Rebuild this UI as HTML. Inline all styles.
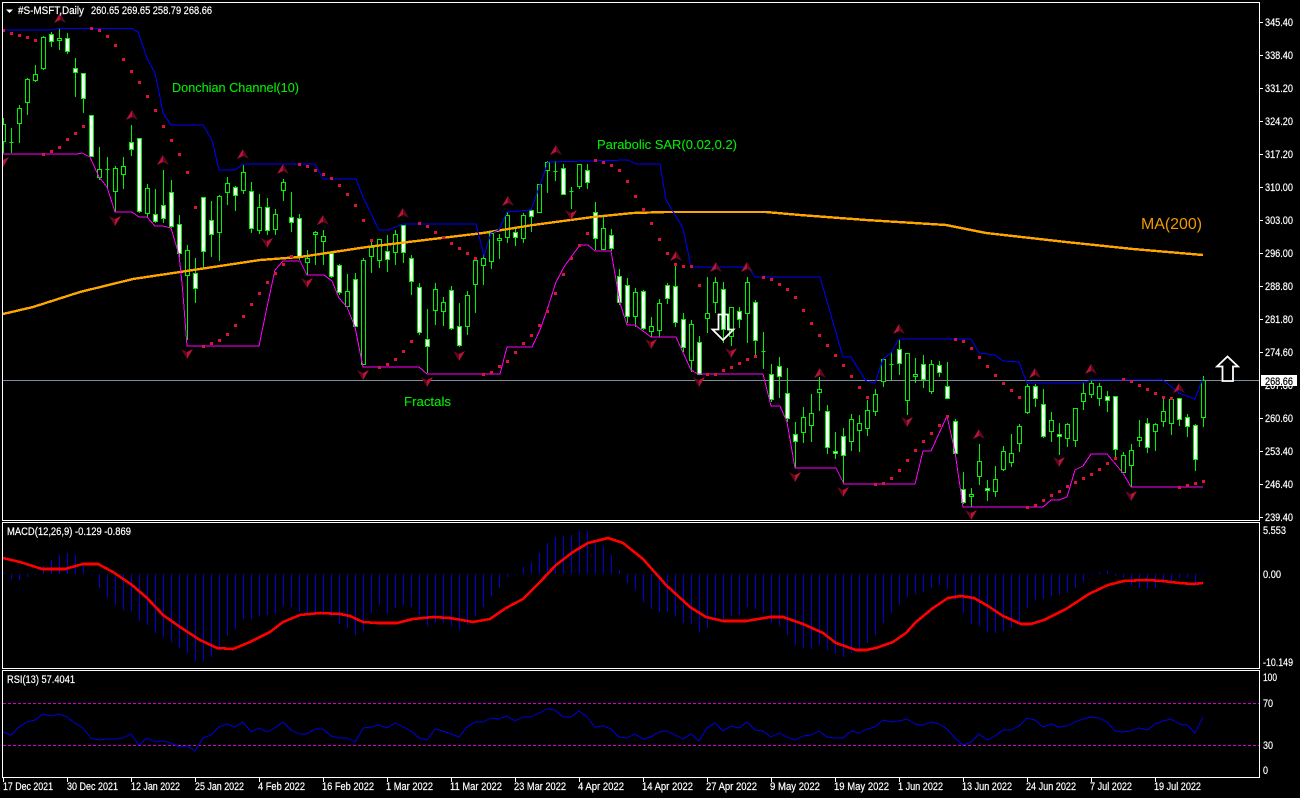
<!DOCTYPE html>
<html><head><meta charset="utf-8"><title>#S-MSFT,Daily</title>
<style>
html,body{margin:0;padding:0;background:#000;width:1300px;height:798px;overflow:hidden}
svg{display:block}
text{font-family:"Liberation Sans",sans-serif;fill:#fff;font-size:11px;stroke:#fff;stroke-width:.2}
.g{fill:#00f000;stroke:#00f000;stroke-width:.1;font-size:13px}
</style></head><body>
<svg width="1300" height="798" viewBox="0 0 1300 798" xmlns="http://www.w3.org/2000/svg">
<defs>
<clipPath id="c1"><rect x="3" y="3" width="1256" height="517"/></clipPath>
<g id="u"><path d="M0 -5L-6 5L0 2Z" fill="#b8123a"/><path d="M0 -5L6 5L0 2Z" fill="#5e0a1e"/></g>
<g id="d"><path d="M0 5L6 -5L0 -2Z" fill="#b8123a"/><path d="M0 5L-6 -5L0 -2Z" fill="#5e0a1e"/></g>
</defs>
<rect width="1300" height="798" fill="#000"/>
<g clip-path="url(#c1)">
<path d="M3 380.5H1259" stroke="#7f8c9a" stroke-width="1" shape-rendering="crispEdges"/>
<path shape-rendering="crispEdges" stroke="#00f400" stroke-width="1" fill="none" d="M3.5 118V153M11.5 128V153M19.5 105V143M27.5 78V115M35.5 65V82M43.5 36V70M51.5 32V47M59.5 28V50M67.5 33V54M75.5 58V97M83.5 73V113M91.5 115V157M99.5 147V180M107.5 157V188M115.5 166V212M123.5 157V189M131.5 125V156M139.5 138V213M147.5 184V217M155.5 189V223M163.5 170V223M171.5 180V228M179.5 215V257M187.5 245V340M195.5 258V303M203.5 197V268M211.5 201V257M219.5 195V261M227.5 177V205M235.5 186V211M243.5 165V194M251.5 182V233M259.5 194V234M267.5 198V235M275.5 209V235M283.5 179V201M291.5 192V232M299.5 214V260M307.5 250V275M315.5 231V265M323.5 230V265M331.5 253V278M339.5 264V295M347.5 274V307M355.5 273V327M363.5 258V365M371.5 240V273M379.5 239V268M387.5 235V272M395.5 230V265M403.5 225V263M411.5 255V295M419.5 283V335M427.5 309V373M435.5 283V325M443.5 297V326M451.5 286V330M459.5 303V347M467.5 291V335M475.5 257V313M483.5 255V285M491.5 233V269M499.5 234V259M507.5 212V243M515.5 228V246M523.5 213V243M531.5 208V232M539.5 184V213M547.5 161V193M555.5 161V181M563.5 164V195M571.5 187V209M579.5 164V189M587.5 164V189M595.5 202V250M603.5 217V250M611.5 229V251M619.5 269V305M627.5 278V323M635.5 288V327M643.5 290V330M651.5 317V337M659.5 299V337M667.5 283V304M675.5 265V327M683.5 313V352M691.5 320V372M699.5 336V375M707.5 277V333M715.5 277V313M723.5 282V343M731.5 307V346M739.5 307V328M747.5 277V343M755.5 300V355M763.5 332V369M771.5 364V402M779.5 357V398M787.5 368V422M795.5 422V468M803.5 407V443M811.5 394V442M819.5 377V411M827.5 405V454M835.5 432V459M843.5 428V484M851.5 414V451M859.5 415V452M867.5 400V436M875.5 389V416M883.5 359V387M891.5 352V380M899.5 340V375M907.5 353V415M915.5 358V383M923.5 355V388M931.5 360V394M939.5 361V377M947.5 362V399M955.5 419V455M963.5 472V504M971.5 488V507M979.5 444V485M987.5 480V501M995.5 466V497M1003.5 446V471M1011.5 434V467M1019.5 424V452M1027.5 384V414M1035.5 384V407M1043.5 389V438M1051.5 412V442M1059.5 423V455M1067.5 423V447M1075.5 408V447M1083.5 383V410M1091.5 380V398M1099.5 383V406M1107.5 391V412M1115.5 396V457M1123.5 452V473M1131.5 444V487M1139.5 420V447M1147.5 418V453M1155.5 423V451M1163.5 398V427M1171.5 398V435M1179.5 398V426M1187.5 414V437M1195.5 424V471M1203.5 376V427"/>
<path shape-rendering="crispEdges" stroke="#00f400" stroke-width="1" fill="#000" d="M1.5 124.5h4V141.5h-4zM9.5 142.5h4zM17.5 108.5h4V123.5h-4zM25.5 79.5h4V102.5h-4zM33.5 74.5h4V80.5h-4zM41.5 37.5h4V68.5h-4zM57.5 38.5h4V40.5h-4zM97.5 169.5h4V177.5h-4zM105.5 169.5h4zM113.5 168.5h4V191.5h-4zM121.5 166.5h4V174.5h-4zM145.5 188.5h4V213.5h-4zM185.5 250.5h4V275.5h-4zM217.5 196.5h4V232.5h-4zM225.5 183.5h4V192.5h-4zM241.5 172.5h4V190.5h-4zM257.5 207.5h4V230.5h-4zM273.5 214.5h4V229.5h-4zM281.5 182.5h4V190.5h-4zM305.5 258.5h4V262.5h-4zM313.5 232.5h4V234.5h-4zM321.5 236.5h4V241.5h-4zM345.5 291.5h4V306.5h-4zM361.5 260.5h4V364.5h-4zM369.5 247.5h4V256.5h-4zM377.5 239.5h4V260.5h-4zM393.5 234.5h4V252.5h-4zM433.5 289.5h4V310.5h-4zM441.5 302.5h4V311.5h-4zM465.5 295.5h4V326.5h-4zM473.5 260.5h4V284.5h-4zM481.5 258.5h4V265.5h-4zM489.5 233.5h4V261.5h-4zM497.5 238.5h4V240.5h-4zM505.5 215.5h4V237.5h-4zM521.5 215.5h4V238.5h-4zM537.5 184.5h4V212.5h-4zM545.5 162.5h4V170.5h-4zM553.5 171.5h4zM569.5 191.5h4zM577.5 164.5h4V186.5h-4zM601.5 228.5h4V249.5h-4zM633.5 292.5h4V316.5h-4zM649.5 326.5h4V331.5h-4zM657.5 303.5h4V330.5h-4zM689.5 324.5h4V360.5h-4zM705.5 313.5h4V318.5h-4zM713.5 282.5h4V302.5h-4zM729.5 307.5h4V336.5h-4zM745.5 282.5h4V313.5h-4zM761.5 351.5h4zM801.5 417.5h4V432.5h-4zM809.5 413.5h4V425.5h-4zM817.5 389.5h4V392.5h-4zM849.5 419.5h4V441.5h-4zM857.5 423.5h4V430.5h-4zM865.5 410.5h4V428.5h-4zM873.5 394.5h4V411.5h-4zM881.5 359.5h4V381.5h-4zM889.5 364.5h4zM905.5 353.5h4V400.5h-4zM913.5 374.5h4V376.5h-4zM929.5 364.5h4V391.5h-4zM969.5 494.5h4V496.5h-4zM977.5 461.5h4V476.5h-4zM993.5 479.5h4V491.5h-4zM1001.5 451.5h4V469.5h-4zM1009.5 453.5h4V462.5h-4zM1017.5 426.5h4V443.5h-4zM1025.5 386.5h4V412.5h-4zM1049.5 420.5h4V431.5h-4zM1065.5 424.5h4V438.5h-4zM1073.5 408.5h4V440.5h-4zM1081.5 393.5h4V401.5h-4zM1089.5 383.5h4V394.5h-4zM1097.5 386.5h4V398.5h-4zM1121.5 455.5h4V472.5h-4zM1129.5 450.5h4V465.5h-4zM1137.5 437.5h4V440.5h-4zM1153.5 424.5h4V431.5h-4zM1161.5 411.5h4V421.5h-4zM1169.5 399.5h4V423.5h-4zM1201.5 380.5h4V417.5h-4z"/>
<path shape-rendering="crispEdges" stroke="#00f400" stroke-width="1" fill="#fff" d="M49.5 34.5h4V41.5h-4zM65.5 38.5h4V51.5h-4zM73.5 68.5h4V72.5h-4zM81.5 73.5h4V98.5h-4zM89.5 115.5h4V156.5h-4zM129.5 142.5h4V149.5h-4zM137.5 138.5h4V211.5h-4zM153.5 214.5h4V221.5h-4zM161.5 205.5h4V218.5h-4zM169.5 192.5h4V226.5h-4zM177.5 224.5h4V253.5h-4zM193.5 273.5h4V288.5h-4zM201.5 197.5h4V251.5h-4zM209.5 220.5h4V234.5h-4zM233.5 187.5h4V195.5h-4zM249.5 191.5h4V228.5h-4zM265.5 207.5h4V230.5h-4zM289.5 217.5h4V222.5h-4zM297.5 218.5h4V257.5h-4zM329.5 253.5h4V276.5h-4zM337.5 265.5h4V292.5h-4zM353.5 279.5h4V326.5h-4zM385.5 251.5h4V259.5h-4zM401.5 225.5h4V252.5h-4zM409.5 258.5h4V281.5h-4zM417.5 287.5h4V332.5h-4zM425.5 339.5h4V346.5h-4zM449.5 290.5h4V328.5h-4zM457.5 326.5h4V345.5h-4zM513.5 232.5h4V237.5h-4zM529.5 210.5h4V216.5h-4zM561.5 168.5h4V194.5h-4zM585.5 170.5h4V182.5h-4zM593.5 212.5h4V238.5h-4zM609.5 235.5h4V248.5h-4zM617.5 276.5h4V302.5h-4zM625.5 285.5h4V316.5h-4zM641.5 291.5h4V328.5h-4zM665.5 285.5h4V298.5h-4zM673.5 286.5h4V322.5h-4zM681.5 319.5h4V347.5h-4zM697.5 342.5h4V374.5h-4zM721.5 289.5h4V329.5h-4zM737.5 311.5h4V319.5h-4zM753.5 302.5h4V340.5h-4zM769.5 374.5h4V399.5h-4zM777.5 366.5h4V376.5h-4zM785.5 393.5h4V418.5h-4zM793.5 434.5h4V441.5h-4zM825.5 411.5h4V447.5h-4zM833.5 451.5h4V453.5h-4zM841.5 436.5h4V455.5h-4zM897.5 349.5h4V363.5h-4zM921.5 364.5h4V379.5h-4zM937.5 365.5h4V372.5h-4zM945.5 386.5h4V398.5h-4zM953.5 421.5h4V453.5h-4zM961.5 489.5h4V502.5h-4zM985.5 488.5h4V490.5h-4zM1033.5 386.5h4V398.5h-4zM1041.5 404.5h4V436.5h-4zM1057.5 434.5h4V436.5h-4zM1105.5 396.5h4V400.5h-4zM1113.5 396.5h4V449.5h-4zM1145.5 423.5h4V447.5h-4zM1177.5 398.5h4V419.5h-4zM1185.5 417.5h4V426.5h-4zM1193.5 425.5h4V459.5h-4z"/>
<polyline shape-rendering="crispEdges" fill="none" stroke="#ffa500" stroke-width="2.4" points="3,314 33,307 80,292 133,279 180,272 220,266 260,260 300,257 367,247 433,239 483,233 533,225 593,217 633,213 666,212 766,212 800,215 866,220 946,225 986,233 1066,242 1133,249 1203,255"/>
<polyline shape-rendering="crispEdges" fill="none" stroke="#0000ff" stroke-width="1" points="3,30 51,30 59,28.5 132,28.5 138,32 147,58 155,73 160,97 163,113 171,125 203,125 212,140 219,170 235,170 243,164 315,164 323,179 356,179 363,197 379,230 388,230 403,224 476,224 484,256 491,233 499,230 507,212 531,210 540,185 548,162 628,160 636,164 660,164 666,200 683,228 691,267 748,267 755,277 820,277 843,357 851,357 866,381 875,383 883,359 891,353 899,339 971,339 979,353 995,355 1003,361 1019,362 1027,383 1083,383 1091,380 1163,380 1179,393 1195,399 1203,378"/>
<polyline shape-rendering="crispEdges" fill="none" stroke="#ff00ff" stroke-width="1" points="3,154 77,154 82,153 90,157 99,177 107,187 115,212 132,212 139,217 147,217 155,226 163,226 171,228 179,255 182,283 184,307 187,346 259,346 267,307 275,270 283,261 300,261 307,275 324,275 332,281 339,298 347,307 355,327 363,367 419,367 427,374 500,374 507,347 532,347 540,330 548,307 556,282 564,267 571,257 580,245 588,245 595,251 611,251 620,303 627,325 635,325 651,337 676,337 691,370 698,374 763,374 771,406 780,406 787,422 795,468 836,468 844,484 915,484 923,451 931,451 947,416 955,452 963,507 1043,507 1051,500 1059,500 1067,497 1075,470 1083,466 1091,454 1107,454 1123,473 1131,487 1203,487"/>
<path shape-rendering="crispEdges" fill="#dc143c" d="M2 29h3v3h-3zM10 32h3v3h-3zM18 34h3v3h-3zM26 36h3v3h-3zM34 39h3v3h-3zM42 153h3v3h-3zM50 150h3v3h-3zM58 146h3v3h-3zM66 138h3v3h-3zM74 132h3v3h-3zM82 125h3v3h-3zM90 27h3v3h-3zM98 29h3v3h-3zM106 35h3v3h-3zM114 44h3v3h-3zM122 58h3v3h-3zM130 70h3v3h-3zM138 81h3v3h-3zM146 95h3v3h-3zM154 109h3v3h-3zM162 125h3v3h-3zM170 139h3v3h-3zM178 153h3v3h-3zM186 171h3v3h-3zM194 206h3v3h-3zM202 345h3v3h-3zM210 342h3v3h-3zM218 339h3v3h-3zM226 333h3v3h-3zM234 324h3v3h-3zM242 315h3v3h-3zM250 303h3v3h-3zM258 292h3v3h-3zM266 281h3v3h-3zM274 272h3v3h-3zM282 263h3v3h-3zM290 255h3v3h-3zM298 163h3v3h-3zM306 165h3v3h-3zM314 169h3v3h-3zM322 173h3v3h-3zM330 177h3v3h-3zM338 184h3v3h-3zM346 193h3v3h-3zM354 204h3v3h-3zM362 219h3v3h-3zM370 239h3v3h-3zM378 366h3v3h-3zM386 363h3v3h-3zM394 358h3v3h-3zM402 350h3v3h-3zM410 340h3v3h-3zM418 222h3v3h-3zM426 225h3v3h-3zM434 231h3v3h-3zM442 236h3v3h-3zM450 242h3v3h-3zM458 247h3v3h-3zM466 252h3v3h-3zM474 257h3v3h-3zM482 373h3v3h-3zM490 371h3v3h-3zM498 365h3v3h-3zM506 360h3v3h-3zM514 351h3v3h-3zM522 342h3v3h-3zM530 334h3v3h-3zM538 324h3v3h-3zM546 310h3v3h-3zM554 292h3v3h-3zM562 273h3v3h-3zM570 257h3v3h-3zM578 244h3v3h-3zM586 232h3v3h-3zM594 159h3v3h-3zM602 161h3v3h-3zM610 164h3v3h-3zM618 169h3v3h-3zM626 180h3v3h-3zM634 195h3v3h-3zM642 208h3v3h-3zM650 222h3v3h-3zM658 238h3v3h-3zM666 252h3v3h-3zM674 263h3v3h-3zM682 265h3v3h-3zM690 265h3v3h-3zM698 284h3v3h-3zM706 373h3v3h-3zM714 373h3v3h-3zM722 369h3v3h-3zM730 366h3v3h-3zM738 362h3v3h-3zM746 358h3v3h-3zM754 355h3v3h-3zM762 276h3v3h-3zM770 278h3v3h-3zM778 283h3v3h-3zM786 288h3v3h-3zM794 296h3v3h-3zM802 309h3v3h-3zM810 322h3v3h-3zM818 334h3v3h-3zM826 344h3v3h-3zM834 354h3v3h-3zM842 364h3v3h-3zM850 375h3v3h-3zM858 386h3v3h-3zM866 396h3v3h-3zM874 483h3v3h-3zM882 482h3v3h-3zM890 477h3v3h-3zM898 469h3v3h-3zM906 459h3v3h-3zM914 449h3v3h-3zM922 440h3v3h-3zM930 432h3v3h-3zM938 424h3v3h-3zM946 415h3v3h-3zM954 338h3v3h-3zM962 340h3v3h-3zM970 347h3v3h-3zM978 356h3v3h-3zM986 365h3v3h-3zM994 374h3v3h-3zM1002 382h3v3h-3zM1010 389h3v3h-3zM1018 396h3v3h-3zM1026 506h3v3h-3zM1034 504h3v3h-3zM1042 499h3v3h-3zM1050 494h3v3h-3zM1058 490h3v3h-3zM1066 485h3v3h-3zM1074 481h3v3h-3zM1082 477h3v3h-3zM1090 473h3v3h-3zM1098 468h3v3h-3zM1106 462h3v3h-3zM1114 457h3v3h-3zM1122 378h3v3h-3zM1130 380h3v3h-3zM1138 384h3v3h-3zM1146 388h3v3h-3zM1154 392h3v3h-3zM1162 396h3v3h-3zM1170 397h3v3h-3zM1178 486h3v3h-3zM1186 484h3v3h-3zM1194 482h3v3h-3zM1202 480h3v3h-3z"/>
<use href="#u" x="60" y="18"/><use href="#u" x="132" y="115"/><use href="#u" x="163" y="160"/><use href="#u" x="243" y="154"/><use href="#u" x="283" y="169"/><use href="#u" x="323" y="220"/><use href="#u" x="403" y="213"/><use href="#u" x="508" y="201"/><use href="#u" x="556" y="150"/><use href="#u" x="676" y="256"/><use href="#u" x="716" y="267"/><use href="#u" x="747" y="267"/><use href="#u" x="820" y="373"/><use href="#u" x="899" y="329"/><use href="#u" x="979" y="434"/><use href="#u" x="1035" y="373"/><use href="#u" x="1091" y="369"/><use href="#u" x="1179" y="388"/>
<use href="#d" x="3" y="162"/><use href="#d" x="115" y="221"/><use href="#d" x="267" y="243"/><use href="#d" x="187" y="354"/><use href="#d" x="307" y="283"/><use href="#d" x="363" y="375"/><use href="#d" x="427" y="382"/><use href="#d" x="459" y="356"/><use href="#d" x="571" y="215"/><use href="#d" x="651" y="344"/><use href="#d" x="699" y="382"/><use href="#d" x="731" y="353"/><use href="#d" x="795" y="477"/><use href="#d" x="843" y="492"/><use href="#d" x="907" y="422"/><use href="#d" x="971" y="515"/><use href="#d" x="1059" y="462"/><use href="#d" x="1131" y="496"/>
<path d="M718.5 314.5H728V329.5H733.5L723 340L712.5 329.5H718.5Z" fill="none" stroke="#fff" stroke-width="1.8"/>
<path d="M1227.5 356.5L1238 366.5H1233V381H1222.5V366.5H1217Z" fill="#000" stroke="#fff" stroke-width="1.8"/>
</g>
<!-- MACD histogram -->
<path shape-rendering="crispEdges" stroke="#0000e0" stroke-width="1" d="M3.5 572V574M11.5 574V579M19.5 574V580M27.5 574V577M35.5 574V575M43.5 566V574M51.5 560V574M59.5 555V574M67.5 553V574M75.5 555V574M83.5 566V574M91.5 574V575M99.5 574V588M107.5 574V598M115.5 574V605M123.5 574V610M131.5 574V611M139.5 574V621M147.5 574V625M155.5 574V633M163.5 574V637M171.5 574V642M179.5 574V648M187.5 574V653M195.5 574V661M203.5 574V661M211.5 574V657M219.5 574V647M227.5 574V636M235.5 574V629M243.5 574V619M251.5 574V619M259.5 574V616M267.5 574V615M275.5 574V614M283.5 574V606M291.5 574V607M299.5 574V612M307.5 574V613M315.5 574V612M323.5 574V615M331.5 574V617M339.5 574V624M347.5 574V628M355.5 574V635M363.5 574V631M371.5 574V613M379.5 574V605M387.5 574V614M395.5 574V608M403.5 574V605M411.5 574V607M419.5 574V615M427.5 574V626M435.5 574V623M443.5 574V623M451.5 574V626M459.5 574V630M467.5 574V625M475.5 574V616M483.5 574V607M491.5 574V596M499.5 574V588M507.5 574V577M515.5 574V575M523.5 567V574M531.5 562V574M539.5 553V574M547.5 543V574M555.5 537V574M563.5 536V574M571.5 535V574M579.5 531V574M587.5 531V574M595.5 542V574M603.5 546V574M611.5 555V574M619.5 570V574M627.5 574V583M635.5 574V590M643.5 574V602M651.5 574V609M659.5 574V612M667.5 574V612M675.5 574V616M683.5 574V623M691.5 574V624M699.5 574V632M707.5 574V628M715.5 574V618M723.5 574V620M731.5 574V616M739.5 574V615M747.5 574V607M755.5 574V609M763.5 574V613M771.5 574V623M779.5 574V626M787.5 574V635M795.5 574V645M803.5 574V648M811.5 574V649M819.5 574V645M827.5 574V650M835.5 574V654M843.5 574V657M851.5 574V653M859.5 574V649M867.5 574V643M875.5 574V635M883.5 574V623M891.5 574V613M899.5 574V605M907.5 574V597M915.5 574V594M923.5 574V592M931.5 574V588M939.5 574V585M947.5 574V589M955.5 574V600M963.5 574V613M971.5 574V624M979.5 574V626M987.5 574V632M995.5 574V633M1003.5 574V631M1011.5 574V628M1019.5 574V622M1027.5 574V608M1035.5 574V600M1043.5 574V599M1051.5 574V596M1059.5 574V595M1067.5 574V593M1075.5 574V588M1083.5 574V582M1091.5 574V575M1099.5 572V574M1107.5 571V574M1115.5 574V576M1123.5 574V578M1131.5 574V586M1139.5 574V588M1147.5 574V589M1155.5 574V588M1163.5 574V583M1171.5 574V582M1179.5 574V578M1187.5 574V578M1195.5 574V583M1203.5 574V575"/>
<polyline shape-rendering="crispEdges" fill="none" stroke="#ff0000" stroke-width="2.6" stroke-linejoin="round" points="3,558 20,562 42,569 65,569 83,564 98,564 113,572 132,585 147,598 163,615 180,627 200,640 217,648 233,649 250,642 270,632 283,622 300,615 320,613 340,614 350,616 363,622 377,623 397,623 413,619 433,617 450,618 473,622 490,619 506,608 523,599 540,582 556,565 573,552 588,543 608,538 623,543 643,559 666,585 690,607 706,617 723,621 746,621 770,617 783,617 803,624 823,633 836,643 856,650 866,650 876,648 893,642 906,633 916,622 933,608 948,598 961,596 974,598 988,606 1003,616 1021,624 1031,624 1044,620 1066,609 1089,594 1108,585 1124,581 1146,580 1163,581 1179,583 1194,584 1203,583"/>
<!-- RSI -->
<path shape-rendering="crispEdges" stroke="#d000d0" stroke-width="1" stroke-dasharray="3 2" d="M3 703.5H1259M3 745.5H1259"/>
<polyline shape-rendering="crispEdges" fill="none" stroke="#0000e0" stroke-width="1" points="3,732 11,735 19,727 27,722 35,720 43,714 51,716 59,714 67,717 75,723 83,728 91,738 99,740 107,739 115,739 123,738 131,734 139,745 147,738 155,742 163,741 171,743 179,747 187,746 195,751 203,738 211,735 219,727 227,724 235,727 243,722 251,732 259,728 267,732 275,728 283,722 291,730 299,734 307,734 315,729 323,729 331,736 339,738 347,738 355,742 363,728 371,727 379,725 387,728 395,723 403,727 411,731 419,738 427,740 435,729 443,731 451,734 459,737 467,727 475,722 483,722 491,718 499,719 507,716 515,721 523,717 531,717 539,713 547,709 555,710 563,717 571,717 579,711 587,717 595,727 603,726 611,729 619,737 627,738 635,734 643,739 651,737 659,732 667,731 675,735 683,739 691,734 699,741 707,728 715,723 723,731 731,726 739,728 747,722 755,730 763,731 771,737 779,733 787,737 795,740 803,736 811,735 819,731 827,737 835,738 843,738 851,731 859,733 867,729 875,727 883,720 891,722 899,721 907,719 915,724 923,725 931,722 939,724 947,729 955,738 963,745 971,742 979,734 987,740 995,736 1003,730 1011,730 1019,726 1027,718 1035,720 1043,727 1051,724 1059,727 1067,726 1075,722 1083,719 1091,717 1099,718 1107,722 1115,731 1123,732 1131,731 1139,728 1147,730 1155,724 1163,721 1171,719 1179,724 1187,725 1195,733 1203,717"/>
<!-- frames and ticks -->
<path shape-rendering="crispEdges" fill="none" stroke="#fff" stroke-width="1" d="M2.5 2.5H1259.5V520.5H2.5ZM2.5 522.5H1259.5V668.5H2.5ZM2.5 670.5H1259.5V777.5H2.5Z"/>
<path shape-rendering="crispEdges" stroke="#fff" stroke-width="1" d="M1259 22.5h4M1259 55.5h4M1259 88.5h4M1259 121.5h4M1259 154.5h4M1259 187.5h4M1259 220.5h4M1259 253.5h4M1259 286.5h4M1259 319.5h4M1259 352.5h4M1259 418.5h4M1259 451.5h4M1259 484.5h4M1259 517.5h4M3.5 777v5M67.5 777v5M131.5 777v5M195.5 777v5M259.5 777v5M323.5 777v5M387.5 777v5M451.5 777v5M515.5 777v5M579.5 777v5M643.5 777v5M707.5 777v5M771.5 777v5M835.5 777v5M899.5 777v5M963.5 777v5M1027.5 777v5M1091.5 777v5M1155.5 777v5"/>
<!-- header -->
<path d="M6 9.5H13L9.5 13Z" fill="#fff"/>
<text x="18" y="14" textLength="66" lengthAdjust="spacingAndGlyphs">#S-MSFT,Daily</text>
<text x="91" y="14" textLength="121" lengthAdjust="spacingAndGlyphs">260.65 269.65 258.79 268.66</text>
<text x="7" y="535" textLength="124" lengthAdjust="spacingAndGlyphs">MACD(12,26,9) -0.129 -0.869</text>
<text x="7" y="683" textLength="68" lengthAdjust="spacingAndGlyphs">RSI(13) 57.4041</text>
<!-- annotations -->
<text class="g" x="172" y="92" textLength="127" lengthAdjust="spacingAndGlyphs">Donchian Channel(10)</text>
<text class="g" x="597" y="149" textLength="140" lengthAdjust="spacingAndGlyphs">Parabolic SAR(0.02,0.2)</text>
<text class="g" x="404" y="406" textLength="47" lengthAdjust="spacingAndGlyphs">Fractals</text>
<text x="1141" y="229" textLength="61" lengthAdjust="spacingAndGlyphs" style="fill:#f09a00;stroke:none;font-size:16px">MA(200)</text>
<!-- price axis -->
<g>
<text x="1265" y="26" textLength="28" lengthAdjust="spacingAndGlyphs">345.40</text>
<text x="1265" y="59" textLength="28" lengthAdjust="spacingAndGlyphs">338.40</text>
<text x="1265" y="92" textLength="28" lengthAdjust="spacingAndGlyphs">331.20</text>
<text x="1265" y="125" textLength="28" lengthAdjust="spacingAndGlyphs">324.20</text>
<text x="1265" y="158" textLength="28" lengthAdjust="spacingAndGlyphs">317.20</text>
<text x="1265" y="191" textLength="28" lengthAdjust="spacingAndGlyphs">310.00</text>
<text x="1265" y="224" textLength="28" lengthAdjust="spacingAndGlyphs">303.00</text>
<text x="1265" y="257" textLength="28" lengthAdjust="spacingAndGlyphs">296.00</text>
<text x="1265" y="290" textLength="28" lengthAdjust="spacingAndGlyphs">288.80</text>
<text x="1265" y="323" textLength="28" lengthAdjust="spacingAndGlyphs">281.80</text>
<text x="1265" y="356" textLength="28" lengthAdjust="spacingAndGlyphs">274.60</text>
<text x="1265" y="389" textLength="28" lengthAdjust="spacingAndGlyphs">267.80</text>
<text x="1265" y="422" textLength="28" lengthAdjust="spacingAndGlyphs">260.60</text>
<text x="1265" y="455" textLength="28" lengthAdjust="spacingAndGlyphs">253.40</text>
<text x="1265" y="488" textLength="28" lengthAdjust="spacingAndGlyphs">246.40</text>
<text x="1265" y="521" textLength="28" lengthAdjust="spacingAndGlyphs">239.40</text>
<rect x="1261" y="375" width="36" height="11" fill="#fff"/>
<text x="1265" y="385" textLength="28" lengthAdjust="spacingAndGlyphs" style="fill:#000;stroke:#000">268.66</text>
<text x="1263" y="534" textLength="23" lengthAdjust="spacingAndGlyphs">5.553</text>
<text x="1263" y="578" textLength="18" lengthAdjust="spacingAndGlyphs">0.00</text>
<text x="1263" y="666" textLength="30" lengthAdjust="spacingAndGlyphs">-10.149</text>
<text x="1263" y="681" textLength="14" lengthAdjust="spacingAndGlyphs">100</text>
<text x="1263" y="707" textLength="10" lengthAdjust="spacingAndGlyphs">70</text>
<text x="1263" y="749" textLength="10" lengthAdjust="spacingAndGlyphs">30</text>
<text x="1263" y="774" textLength="5" lengthAdjust="spacingAndGlyphs">0</text>
</g>
<!-- date axis -->
<g>
<text x="3" y="790" textLength="50" lengthAdjust="spacingAndGlyphs">17 Dec 2021</text>
<text x="67" y="790" textLength="51" lengthAdjust="spacingAndGlyphs">30 Dec 2021</text>
<text x="131" y="790" textLength="49" lengthAdjust="spacingAndGlyphs">12 Jan 2022</text>
<text x="195" y="790" textLength="49" lengthAdjust="spacingAndGlyphs">25 Jan 2022</text>
<text x="258" y="790" textLength="47" lengthAdjust="spacingAndGlyphs">4 Feb 2022</text>
<text x="322" y="790" textLength="52" lengthAdjust="spacingAndGlyphs">16 Feb 2022</text>
<text x="386" y="790" textLength="47" lengthAdjust="spacingAndGlyphs">1 Mar 2022</text>
<text x="450" y="790" textLength="52" lengthAdjust="spacingAndGlyphs">11 Mar 2022</text>
<text x="514" y="790" textLength="52" lengthAdjust="spacingAndGlyphs">23 Mar 2022</text>
<text x="578" y="790" textLength="46" lengthAdjust="spacingAndGlyphs">4 Apr 2022</text>
<text x="642" y="790" textLength="51" lengthAdjust="spacingAndGlyphs">14 Apr 2022</text>
<text x="706" y="790" textLength="51" lengthAdjust="spacingAndGlyphs">27 Apr 2022</text>
<text x="770" y="790" textLength="50" lengthAdjust="spacingAndGlyphs">9 May 2022</text>
<text x="834" y="790" textLength="55" lengthAdjust="spacingAndGlyphs">19 May 2022</text>
<text x="898" y="790" textLength="45" lengthAdjust="spacingAndGlyphs">1 Jun 2022</text>
<text x="962" y="790" textLength="50" lengthAdjust="spacingAndGlyphs">13 Jun 2022</text>
<text x="1026" y="790" textLength="50" lengthAdjust="spacingAndGlyphs">24 Jun 2022</text>
<text x="1090" y="790" textLength="42" lengthAdjust="spacingAndGlyphs">7 Jul 2022</text>
<text x="1154" y="790" textLength="47" lengthAdjust="spacingAndGlyphs">19 Jul 2022</text>
</g>
</svg>
</body></html>
